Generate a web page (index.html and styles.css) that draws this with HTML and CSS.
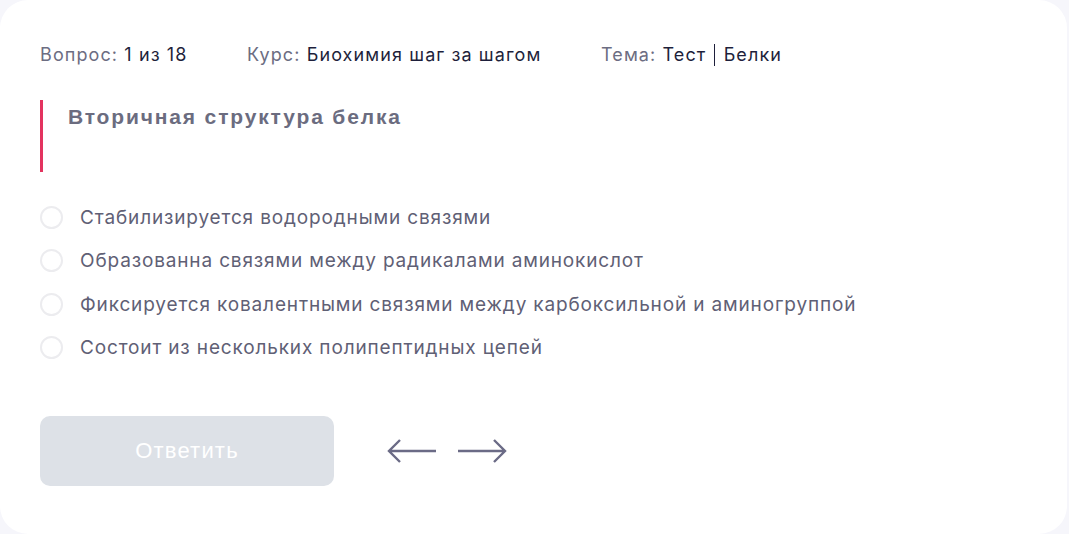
FILE: index.html
```html
<!DOCTYPE html>
<html lang="ru">
<head>
<meta charset="UTF-8">
<meta name="viewport" content="width=device-width, initial-scale=1.0">
<title>Тест | Белки</title>
<link rel="stylesheet" href="styles.css">
</head>
<body>
    <div class="quiz-card">
        <!-- info about the question -->
        <div class="quiz-meta">
            <div class="meta-item meta-question"><span class="meta-label">Вопрос:</span> 1 из 18</div>
            <div class="meta-item meta-course"><span class="meta-label">Курс:</span> Биохимия шаг за шагом</div>
            <div class="meta-item"><span class="meta-label">Тема:</span> Тест <span class="divider"></span> Белки</div>
        </div>

        <div class="quiz-question">
            <h2>Вторичная структура белка</h2>
        </div>

        <ul class="quiz-options">
            <li><span class="radio"></span>Стабилизируется водородными связями</li>
            <li><span class="radio"></span>Образованна связями между радикалами аминокислот</li>
            <li><span class="radio"></span>Фиксируется ковалентными связями между карбоксильной и аминогруппой</li>
            <li><span class="radio"></span>Состоит из нескольких полипептидных цепей</li>
        </ul>

        <div class="quiz-actions">
            <button class="answer-btn" disabled>Ответить</button>
            <div class="nav-arrows">
                <button class="arrow-btn" title="Назад">
                    <svg width="50" height="26" viewBox="0 0 50 26"><path d="M49 13H2M13 2L2 13l11 11" fill="none" stroke="#6b6b86" stroke-width="2.4"/></svg>
                </button>
                <button class="arrow-btn" title="Вперёд">
                    <svg width="50" height="26" viewBox="0 0 50 26"><path d="M1 13h47M37 2l11 11-11 11" fill="none" stroke="#6b6b86" stroke-width="2.4"/></svg>
                </button>
            </div>
        </div>
    </div>
</body>
</html>
```

FILE: styles.css
```css
body {
    margin: 0;
    padding: 0;
    background-color: #f6f6fb;
    font-family: Inter, "Open Sans", sans-serif;
}
.quiz-card {
    width: 1067px;
    height: 534px;
    box-sizing: border-box;
    background-color: #fff;
    border-radius: 28px;
    padding: 43px 40px 0 40px;
}
.quiz-meta {
    display: flex;
    font-size: 18px;
    color: #1e1f3b;
    line-height: 24px;
    letter-spacing: 1.1px;
}
.meta-item {
    display: flex;
    align-items: center;
    white-space: pre;
}
.meta-question {
    width: 207px;
}
.meta-course {
    width: 354px;
}
.meta-label {
    color: #6c6d82;
}
.divider {
    display: inline-block;
    width: 1px;
    height: 22px;
    background-color: #1e1f3b;
    margin: 0 2px;
}
.quiz-question {
    margin-top: 33px;
    border-left: 3px solid #e3335f;
    height: 72px;
    padding-left: 25px;
}
.quiz-question h2 {
    margin: 0;
    padding-top: 5px;
    font-family: "Liberation Sans", Arial, sans-serif;
    font-size: 21px;
    font-weight: bold;
    color: #6b6c7f;
    line-height: 24px;
    letter-spacing: 1.85px;
}
.quiz-options {
    list-style: none;
    margin: 24px 0 0 0;
    padding: 0;
}
.quiz-options li {
    display: flex;
    align-items: center;
    height: 43.3px;
    font-size: 19px;
    color: #5f6075;
    letter-spacing: 0.85px;
}
.radio {
    width: 19px;
    height: 19px;
    border: 2px solid #ececef;
    border-radius: 50%;
    margin-right: 17px;
    flex-shrink: 0;
}
.quiz-actions {
    display: flex;
    align-items: center;
    margin-top: 47px;
}
.answer-btn {
    width: 294px;
    height: 70px;
    border: none;
    border-radius: 10px;
    background-color: #dde1e7;
    color: #fff;
    font-family: "Liberation Sans", Arial, sans-serif;
    font-size: 22px;
    letter-spacing: 1.2px;
}
.nav-arrows {
    display: flex;
    gap: 20px;
    margin-left: 53px;
}
.arrow-btn {
    border: none;
    background: none;
    padding: 0;
    cursor: pointer;
    display: flex;
}
```
